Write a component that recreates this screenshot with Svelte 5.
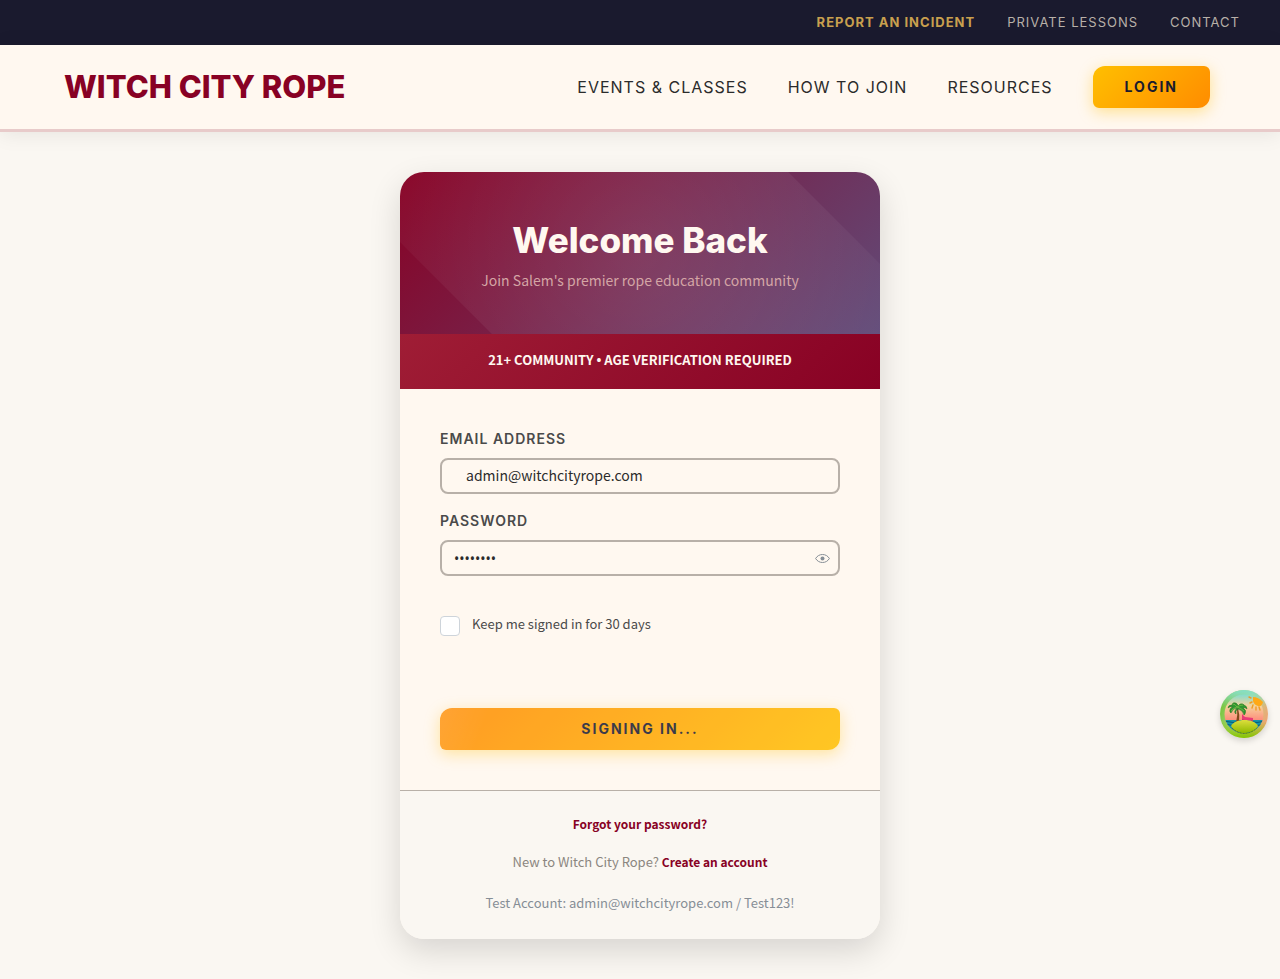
<script>
  let email = $state('admin@witchcityrope.com');
  let password = $state('Test123!');
  let remember = $state(false);
  let visible = $state(false);
</script>

<div class="page">
  <nav class="utility" aria-label="Utility">
    <a class="report" href="#report">Report an Incident</a>
    <a href="#lessons">Private Lessons</a>
    <a href="#contact">Contact</a>
  </nav>

  <header class="main-header">
    <a class="logo" href="#home">WITCH CITY ROPE</a>
    <nav class="main-nav" aria-label="Main">
      <a href="#events">Events &amp; Classes</a>
      <a href="#join">How to Join</a>
      <a href="#resources">Resources</a>
      <a class="cta login" href="#login">Login</a>
    </nav>
  </header>

  <main>
    <section class="card">
      <div class="hero">
        <h1>Welcome Back</h1>
        <p>Join Salem's premier rope education community</p>
      </div>
      <div class="notice">21+ Community <span>•</span> Age Verification Required</div>
      <form onsubmit={(e) => e.preventDefault()}>
        <label class="caption" for="email">Email Address</label>
        <div class="field email"><input id="email" type="email" bind:value={email} /></div>
        <label class="caption" for="password">Password</label>
        <div class="field password">
          <input id="password" type={visible ? 'text' : 'password'} value={password} oninput={(e) => (password = e.currentTarget.value)} />
          <button class="eye" type="button" aria-label="Toggle password visibility" onclick={() => (visible = !visible)}>
            <svg viewBox="0 0 15 15" width="15" height="15" aria-hidden="true">
              <path fill="none" stroke="currentColor" d="M.6 7.5C2.2 4.9 4.6 3.5 7.500 3.500S12.800 4.900 14.400 7.500C12.800 10.100 10.400 11.500 7.500 11.500S2.200 10.100.6 7.500Z" />
              <circle cx="7.500" cy="7.500" r="2" fill="currentColor" />
            </svg>
          </button>
        </div>
        <label class="remember"><input type="checkbox" bind:checked={remember} /><span>Keep me signed in for 30 days</span></label>
        <button class="cta submit" type="submit">Signing In...</button>
      </form>
      <footer>
        <a href="#forgot">Forgot your password?</a>
        <p>New to Witch City Rope? <a href="#register">Create an account</a></p>
        <p class="test">Test Account: admin@witchcityrope.com / Test123!</p>
      </footer>
    </section>
  </main>

  <button class="island" type="button" aria-label="Open developer tools">
    <svg viewBox="0 0 48 48" aria-hidden="true">
      <defs>
        <linearGradient id="ring" x1="0" y1="0.300" x2="1" y2="0.700">
          <stop offset="0" stop-color="#73c33a" /><stop offset=".5" stop-color="#b8dc8a" /><stop offset="1" stop-color="#f2a071" />
        </linearGradient>
        <linearGradient id="rim" x1="0" y1="0" x2="0" y2="1">
          <stop offset="0" stop-color="#84dfc8" /><stop offset=".35" stop-color="#84dfc8" stop-opacity="0" />
          <stop offset=".65" stop-color="#8fc400" stop-opacity="0" /><stop offset="1" stop-color="#82c400" />
        </linearGradient>
        <linearGradient id="sky" x1="0" y1="0" x2="0" y2="1">
          <stop offset="0" stop-color="#7fdccf" /><stop offset=".3" stop-color="#f5d39b" /><stop offset=".7" stop-color="#ff8578" />
        </linearGradient>
        <linearGradient id="sand" x1="0" y1="0" x2="0" y2="1">
          <stop offset="0" stop-color="#dede3c" /><stop offset="1" stop-color="#8fb900" />
        </linearGradient>
        <clipPath id="scene"><circle cx="24" cy="24" r="19.500" /></clipPath>
      </defs>
      <circle cx="24" cy="24" r="24" fill="url(#ring)" />
      <circle cx="24" cy="24" r="24" fill="url(#rim)" />
      <g clip-path="url(#scene)">
        <path d="M4 4h40v40H4z" fill="url(#sky)" />
        <path d="M4 30h40v14H4z" fill="#1593a8" />
        <path d="M4 32q3-1 6 0t6 0 6 0 6 0 6 0 6 0 6 0M4 35q3-1 6 0t6 0 6 0 6 0 6 0 6 0 6 0" fill="none" stroke="#075b7c" />
        <path d="M22 24l3 3 8 1v3l-11-1z" fill="#e83b75" />
        <path d="M23 29l-1 3m10-2v2" stroke="#a7445d" />
      </g>
      <path d="M33 7q5 0 10 5-1 5-5 4t-5-5z" fill="#ffa917" />
      <path d="M31 8l-2-1m3 5-2 1m3 2-1 3m4-1v3m3-3 1 3" stroke="#ef9b24" stroke-width="1.400" stroke-linecap="round" />
      <path d="M18 18q2 7 1 14l-3 1q2-8 1-15z" fill="#81491c" />
      <path d="M17 18q-4 0-6 5l-1-1q-1-4 3-5-3-1-5 1 0-3 4-3l1-2q4-1 5 3 2-3 5-2l1 1q3 1 3 4-2-2-4-1 4 2 2 6l-1 1q-1-5-6-6-3 2-2 5-3-2 1-6z" fill="#2f9630" stroke="#216f1b" stroke-width=".5" />
      <path d="M17 17q-4 1-6 4m6-4q4 1 7 4m-7-4q-2-3-4-3m4 3q3-2 6-2" fill="none" stroke="#81c446" stroke-width=".7" />
      <path d="M11 36c4-8 23-8 27 0-3 5-8 7-14 7s-10-2-13-7z" fill="url(#sand)" />
      <path d="M12 38q12 11 25 0" fill="none" stroke="#4f7900" stroke-width=".8" stroke-dasharray="2 1" />
    </svg>
  </button>
</div>

<style>
  :global(body) { margin: 0; background: #faf7f2; }
  * { box-sizing: border-box; }
  .page {
    --display: Inter, "Open Sans", sans-serif;
    --body: "Noto Sans CJK SC", "Noto Sans", sans-serif;
    min-height: 100vh;
    background: #faf7f2;
    font-family: var(--body);
    font-size: 14px;
    line-height: 24px;
    color: #2b2b2b;
  }
  a { text-decoration: none; color: #880124; font-weight: 700; }
  .utility {
    display: flex; justify-content: flex-end; gap: 32px;
    padding: 12px 40px; background: #1a1a2e;
    font-family: var(--display); font-size: 13px; line-height: 21px;
    letter-spacing: 1px; text-transform: uppercase;
  }
  .utility a { color: #b8b0a8; font-weight: 400; }
  .utility .report { color: #c9a04e; font-weight: 700; }
  .main-header {
    display: flex; align-items: center; justify-content: space-between;
    padding: 21px 70px 21px 64px; background: #fff8f0;
    border-bottom: 3px solid #e8cbca;
    box-shadow: 0 2px 20px rgba(0, 0, 0, .08);
  }
  .logo { font-family: var(--display); font-size: 31px; font-weight: 800; line-height: 42px; }
  .main-nav { display: flex; align-items: center; gap: 40px; font-family: var(--display); font-size: 16px; letter-spacing: 1px; text-transform: uppercase; }
  .main-nav a { color: #2b2b2b; font-weight: 400; }
  .cta, .main-nav .cta {
    border: 0; border-radius: 12px 6px 12px 6px; color: #1a1a2e;
    font-family: var(--display); font-size: 14px; line-height: 22px; font-weight: 700;
    letter-spacing: 2px; text-transform: uppercase; text-align: center;
    box-shadow: 0 4px 15px rgba(255, 191, 0, .4);
  }
  .login { padding: 10px 32px; background: linear-gradient(135deg, #ffbf00, #ff8c00); }
  main { display: flex; justify-content: center; padding: 40px 20px; }
  .card {
    width: 100%; max-width: 480px; overflow: hidden; border-radius: 24px;
    background: #fff8f0; box-shadow: 0 12px 32px rgba(0, 0, 0, .14);
  }
  .hero {
    position: relative; overflow: hidden; padding: 47px 40px 42px; text-align: center;
    background: linear-gradient(135deg, #880124, #614b79);
  }
  .hero::before {
    content: ""; position: absolute; inset: -50%; transform: rotate(45deg);
    background: radial-gradient(circle, rgba(255, 255, 255, .1), transparent 70%);
  }
  h1 { position: relative; margin: 0 0 7px; color: #fff8f0; font-family: var(--display); font-size: 35px; line-height: 42px; font-weight: 800; }
  .hero p { position: relative; margin: 0; color: #d4a5a5; }
  .notice {
    padding: 14px 20px 18px; color: #fff8f0; text-align: center; text-transform: uppercase;
    background: linear-gradient(135deg, #9f1d35, #880124);
    font-size: 13px; line-height: 23px; font-weight: 700;
  }
  .notice span { font-family: "Noto Sans", sans-serif; line-height: 1; }
  form { display: flex; flex-direction: column; padding: 39px 40px 40px; }
  .caption { margin-bottom: 9px; color: #4a4a4a; font-family: var(--display); font-size: 14px; line-height: 21px; font-weight: 600; letter-spacing: 1px; text-transform: uppercase; }
  .field { display: flex; align-items: center; height: 36px; border: 2px solid #b8b0a8; border-radius: 8px; }
  .email { margin-bottom: 16px; }
  .field input { flex: 1; min-width: 0; height: 32px; padding: 0 12px; border: 0; outline: 0; background: transparent; color: #2b2b2b; font: 14px/24px var(--body); }
  .email input { padding: 0 24px 2px; }
  .password input { font-family: "Noto Sans", sans-serif; }
  .eye { display: flex; padding: 8px; border: 0; background: transparent; color: #868e96; }
  .remember { display: flex; gap: 12px; margin: 40px 0 72px; color: #4a4a4a; font-size: 13px; line-height: 16px; }
  .remember input { width: 20px; height: 20px; margin: 0; appearance: none; border: 1px solid #ced4da; border-radius: 4px; background: #fff; }
  .remember input:checked { background: #880124; }
  .submit {
    padding: 10px 20px; opacity: .85;
    background: linear-gradient(110deg, rgba(255, 255, 255, .08), transparent 12%), linear-gradient(135deg, #ff8c00, #ffbf00);
  }
  footer { display: flex; flex-direction: column; align-items: center; padding: 21px 40px 24px; border-top: 1px solid #b8b0a8; background: #faf7f2; font-size: 13px; }
  footer a { font-size: 12px; }
  footer p { margin: 14px 0 0; color: #8b8680; }
  footer .test { margin-top: 17px; color: #868e96; }
  .island { position: fixed; right: 12px; top: 690px; width: 48px; height: 48px; padding: 0; border: 0; border-radius: 50%; background: transparent; box-shadow: 0 3px 6px rgba(0, 0, 0, .15); }
  .island svg { display: block; width: 100%; }
  @media (max-width: 900px) {
    .main-header { flex-direction: column; gap: 20px; padding: 20px; }
    .main-nav { flex-wrap: wrap; justify-content: center; gap: 20px; }
    .utility { flex-wrap: wrap; gap: 16px; }
  }
</style>
